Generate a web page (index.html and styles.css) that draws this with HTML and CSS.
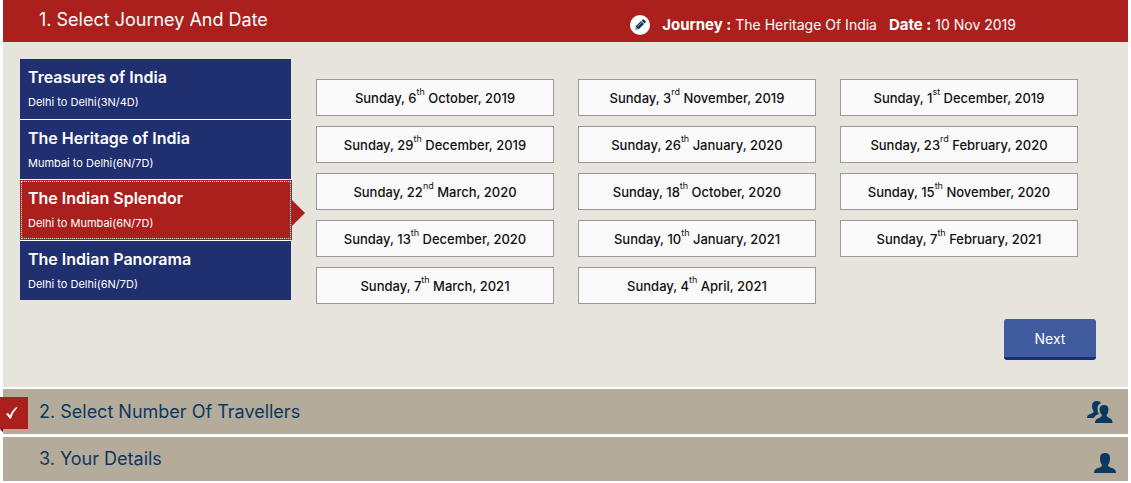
FILE: index.html
```html
<!DOCTYPE html>
<html lang="en">
<head>
    <meta charset="UTF-8">
    <meta name="viewport" content="width=device-width, initial-scale=1.0">
    <title>Select Journey And Date</title>
    <link rel="stylesheet" href="styles.css">
</head>
<body>
    <div class="booking">
        <div class="stepHead active">
            <h2>1. Select Journey And Date</h2>
            <div class="summary">
                <button type="button" class="edit" aria-label="Edit">
                    <svg width="12" height="12" viewBox="0 0 12 12">
                        <path d="M1 11l1-4 5-5 3 3-5 5z" fill="#0b3156"/>
                        <path d="M7.6 1.4l1-1q.6-.4 1.200 0l1.800 1.800q.4.600 0 1.200l-1 1z" fill="#0b3156"/>
                        <path d="M3.500 7.500l4-4M1.500 10.500l.5-2 1.500 1.500z" stroke="#fff" stroke-width=".6" fill="none"/>
                    </svg>
                </button>
                <p><b>Journey :</b> The Heritage Of India</p>
                <p><b>Date :</b> 10 Nov 2019</p>
            </div>
        </div>

        <div class="stepBody">
            <div class="columns">
                <nav class="journeys">
                    <a href="#treasures"><b>Treasures of India</b><span>Delhi to Delhi(3N/4D)</span></a>
                    <a href="#heritage"><b>The Heritage of India</b><span>Mumbai to Delhi(6N/7D)</span></a>
                    <a href="#splendor" class="selected"><b>The Indian Splendor</b><span>Delhi to Mumbai(6N/7D)</span></a>
                    <a href="#panorama"><b>The Indian Panorama</b><span>Delhi to Delhi(6N/7D)</span></a>
                </nav>
                <div class="dates">
                    <button type="button">Sunday, 6<sup>th</sup> October, 2019</button>
                    <button type="button">Sunday, 3<sup>rd</sup> November, 2019</button>
                    <button type="button">Sunday, 1<sup>st</sup> December, 2019</button>
                    <button type="button">Sunday, 29<sup>th</sup> December, 2019</button>
                    <button type="button">Sunday, 26<sup>th</sup> January, 2020</button>
                    <button type="button">Sunday, 23<sup>rd</sup> February, 2020</button>
                    <button type="button">Sunday, 22<sup>nd</sup> March, 2020</button>
                    <button type="button">Sunday, 18<sup>th</sup> October, 2020</button>
                    <button type="button">Sunday, 15<sup>th</sup> November, 2020</button>
                    <button type="button">Sunday, 13<sup>th</sup> December, 2020</button>
                    <button type="button">Sunday, 10<sup>th</sup> January, 2021</button>
                    <button type="button">Sunday, 7<sup>th</sup> February, 2021</button>
                    <button type="button">Sunday, 7<sup>th</sup> March, 2021</button>
                    <button type="button">Sunday, 4<sup>th</sup> April, 2021</button>
                </div>
            </div>
            <div class="actions">
                <button type="button" class="next">Next</button>
            </div>
        </div>

        <div class="stepHead done">
            <span class="tick">
                <svg width="12" height="12" viewBox="0 0 12 12">
                    <path d="M0 7l2-1 2 2.500Q6 3 10.500 0l1 .5Q7 5 5 11.500H3.500Q2 8.500 0 7z" fill="#fff"/>
                </svg>
            </span>
            <h2>2. Select Number Of Travellers</h2>
            <svg class="people" width="26" height="24" viewBox="0 0 26 24">
                <path d="M0 18q0-3 3-4 4-1 3.500-3-1.500-2-1.500-5 0-5 5-5 3 0 4 2-4 2-3.500 6 0 3 1.500 5-4 1-5 4z" fill="#0b3860"/>
                <path d="M8 23q0-4 4-5 3-1 3-3-2.500-2-2.500-5.500 0-4.500 4.500-4.500t4.500 4.500q0 3.500-2 5.500 0 2 3 3 3 1 3 5z" fill="#0b3860"/>
            </svg>
        </div>

        <div class="stepHead">
            <h2>3. Your Details</h2>
            <svg class="person" width="22" height="22" viewBox="0 0 22 22">
                <path d="M0 21q0-4 4-5 4-1 4-3-2-2-2-7 0-5 5-5t5 5q0 5-2 7 0 2 4 3 4 1 4 5z" fill="#0b3860"/>
            </svg>
        </div>
    </div>
</body>
</html>
```
FILE: styles.css
```css
* {
    box-sizing: border-box;
}
body {
    margin: 0;
    background: #fff;
    font-family: Inter, "Liberation Sans", sans-serif;
}
h2, p {
    margin: 0;
}
button {
    font-family: inherit;
    cursor: pointer;
}
.booking {
    margin: 0 3px;
}

/* step bars */
.stepHead {
    position: relative;
    display: flex;
    align-items: center;
    justify-content: space-between;
    height: 44px;
    margin-top: 3px;
    padding: 0 12px 0 36px;
    background: #b5ab9b;
    color: #0b3860;
}
.stepHead h2 {
    font-size: 18px;
    font-weight: 400;
    line-height: 24px;
}
.stepHead.active {
    height: 42px;
    margin-top: 0;
    padding: 0 112px 2px 36px;
    background: #ab201c;
    color: #fff;
}
.stepHead.done {
    height: 45px;
    margin-top: 2px;
    padding-right: 15px;
}
.summary {
    display: flex;
    align-items: center;
    gap: 12px;
    padding-top: 10px;
    font-size: 14px;
    line-height: 20px;
}
.summary b {
    font-size: 15px;
}
.edit {
    display: flex;
    align-items: center;
    justify-content: center;
    width: 20px;
    height: 20px;
    padding: 0;
    border: 0;
    border-radius: 50%;
    background: #fff;
}
.tick {
    position: absolute;
    top: 8px;
    left: -3px;
    display: flex;
    align-items: center;
    width: 28px;
    height: 32px;
    padding-left: 6px;
    background: #ab201c;
}
/* folded corner under the tick */
.tick::after {
    content: "";
    position: absolute;
    top: 100%;
    left: 0;
    border-top: 3px solid #2b1420;
    border-left: 3px solid transparent;
}
.person {
    margin-top: 8px;
}

/* open step */
.stepBody {
    padding: 17px 32px 27px 17px;
    background: #e7e3dd;
}
.columns {
    display: flex;
    align-items: flex-start;
    gap: 25px;
    padding-right: 18px;
}
.journeys {
    display: grid;
    grid-auto-rows: 1fr;
    gap: 1px;
    width: 271px;
    height: 241px;
    flex: none;
    background: #fff;
}
.journeys a {
    position: relative;
    display: flex;
    flex-direction: column;
    gap: 7px;
    padding: 8px 8px 0;
    background: #1f2f70;
    color: #fff;
    text-decoration: none;
}
.journeys b {
    font-size: 16px;
    font-weight: 600;
    line-height: 20px;
}
.journeys span {
    font-size: 11px;
    line-height: 16px;
}
.journeys .selected {
    margin-right: -1px;
    background: #ab201c;
    outline: 1px dotted #fff;
    outline-offset: -2px;
}
.journeys .selected::after {
    content: "";
    position: absolute;
    top: 20px;
    left: 100%;
    border: 13px solid transparent;
    border-left-color: #ab201c;
    border-right: 0;
}
.dates {
    display: grid;
    grid-template-columns: repeat(3, 1fr);
    gap: 10px 24px;
    flex: 1;
    margin-top: 20px;
}
.dates button {
    height: 37px;
    padding: 0;
    border: 1px solid #999;
    background: #fafafa;
    color: #111;
    font-size: 13px;
    font-weight: 500;
    line-height: 20px;
}
.dates sup {
    position: relative;
    top: -8px;
    font-size: 9px;
    font-weight: 400;
    line-height: 0;
    vertical-align: baseline;
}
.actions {
    display: flex;
    justify-content: flex-end;
    margin-top: 15px;
}
.next {
    width: 92px;
    height: 41px;
    border: 0;
    border-bottom: 3px solid #15317e;
    border-radius: 3px;
    background: #415b9f;
    color: #fff;
    font-size: 14px;
}
```
